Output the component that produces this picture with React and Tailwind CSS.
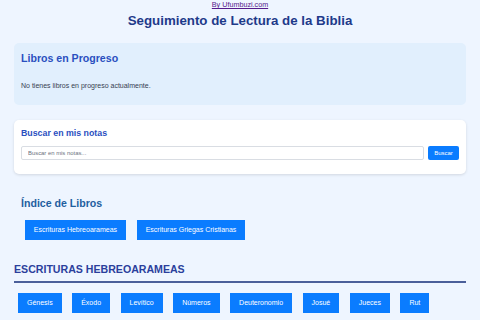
import React from "react";

const books = ["Génesis", "Éxodo", "Levítico", "Números", "Deuteronomio", "Josué", "Jueces", "Rut"];

export default function App() {
  return (
    <div className="min-h-[320px] w-[480px] overflow-hidden bg-[#eef5ff] px-[14px]" style={{ fontFamily: '"Liberation Sans", Arial, sans-serif' }}>
      <div className="h-[10px] text-center text-[7.2px] leading-[10px]">
        <a href="#" className="text-[#551a8b] underline">By Ufumbuzi.com</a>
      </div>
      <h1 className="text-center text-[13.3px] font-bold leading-[22px] text-[#1e3a8a]">Seguimiento de Lectura de la Biblia</h1>

      <div className="mt-[11px] h-[62px] rounded-[5px] bg-[#e1effd] px-[7px] pt-[8px]">
        <h2 className="text-[10.6px] font-bold leading-[14px] text-[#2a4fbf]">Libros en Progreso</h2>
        <p className="mt-[16px] text-[7px] leading-[10px] text-[#374151]">No tienes libros en progreso actualmente.</p>
      </div>

      <div className="mt-[15px] h-[54px] rounded-[5px] bg-white px-[7px] pt-[7px] shadow-[0_1px_3px_rgba(0,0,0,0.12)]">
        <h2 className="text-[8.8px] font-bold leading-[12px] text-[#2a4fbf]">Buscar en mis notas</h2>
        <div className="mt-[7px] flex gap-[4px]">
          <input className="h-[14px] flex-1 rounded-[2px] border border-[#d9dde3] bg-white px-[6px] text-[5.9px] outline-none placeholder:text-[#6b7280]" placeholder="Buscar en mis notas..." />
          <button className="h-[14px] w-[31px] rounded-[2px] bg-[#0a7cff] text-[6px] text-white">Buscar</button>
        </div>
      </div>

      <div className="mt-[22px] px-[7px]">
        <h2 className="text-[10.6px] font-bold leading-[14px] text-[#1f5fa0]">Índice de Libros</h2>
        <div className="mt-[10px] flex gap-[11px] pl-[4px]">
          <button className="h-[20px] w-[101px] bg-[#0a7cff] text-[7px] text-white">Escrituras Hebreoarameas</button>
          <button className="h-[20px] w-[108px] bg-[#0a7cff] text-[7px] text-white">Escrituras Griegas Cristianas</button>
        </div>
      </div>

      <h2 className="mt-[22px] border-b-2 border-[#4a5f9a] pb-[5px] text-[10.6px] font-bold leading-[14px] text-[#2b3f9c]">ESCRITURAS HEBREOARAMEAS</h2>
      <div className="mt-[10px] flex gap-[10.5px] pl-[4px]">
        {books.map((b) => (
          <button key={b} className="h-[20px] bg-[#0a7cff] px-[9px] text-[7px] text-white">{b}</button>
        ))}
      </div>
    </div>
  );
}
